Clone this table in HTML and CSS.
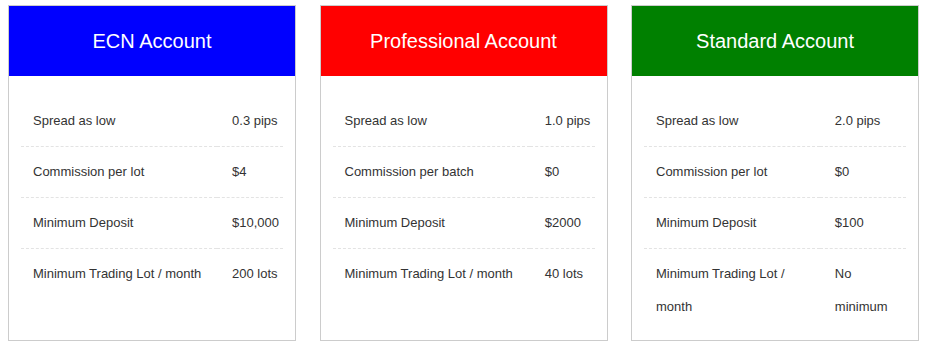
FILE: index.html
```html
<!DOCTYPE html>
<html>
<head>
<meta charset="utf-8">
<link rel="stylesheet" href="styles.css">
</head>
<body>
<div class="plans">
  <div class="card">
    <div class="card-head head-blue">ECN Account</div>
    <div class="card-body">
      <table class="specs">
        <tr><td>Spread as low</td><td>0.3 pips</td></tr>
        <tr><td>Commission per lot</td><td>$4</td></tr>
        <tr><td>Minimum Deposit</td><td>$10,000</td></tr>
        <tr><td>Minimum Trading Lot / month</td><td>200 lots</td></tr>
      </table>
    </div>
  </div>
  <div class="card">
    <div class="card-head head-red">Professional Account</div>
    <div class="card-body">
      <table class="specs">
        <tr><td>Spread as low</td><td>1.0 pips</td></tr>
        <tr><td>Commission per batch</td><td>$0</td></tr>
        <tr><td>Minimum Deposit</td><td>$2000</td></tr>
        <tr><td>Minimum Trading Lot / month</td><td>40 lots</td></tr>
      </table>
    </div>
  </div>
  <div class="card">
    <div class="card-head head-green">Standard Account</div>
    <div class="card-body">
      <table class="specs">
        <tr><td>Spread as low</td><td>2.0 pips</td></tr>
        <tr><td>Commission per lot</td><td>$0</td></tr>
        <tr><td>Minimum Deposit</td><td>$100</td></tr>
        <tr><td>Minimum Trading Lot / month</td><td>No minimum</td></tr>
      </table>
    </div>
  </div>
</div>
</body>
</html>
```

FILE: styles.css
```css
html, body {
  margin: 0;
  padding: 0;
  background: #ffffff;
}

body {
  font-family: "Liberation Sans", Arial, sans-serif;
  padding: 5px 10px 0 8px;
}

.plans {
  display: flex;
  justify-content: space-between;
  align-items: stretch;
  width: 911px;
}

.card {
  width: 288px;
  box-sizing: border-box;
  border: 1px solid #cccccc;
  background: #ffffff;
}

.card-head {
  height: 70px;
  display: flex;
  align-items: center;
  justify-content: center;
  color: #ffffff;
  font-size: 20px;
}

.head-blue { background: #0000ff; }
.head-red { background: #ff0000; }
.head-green { background: #008000; }

.card-body {
  padding: 20px 12px 8px;
}

.specs {
  width: 100%;
  border-collapse: collapse;
  font-size: 13px;
  color: #333333;
}

.specs td {
  padding: 8px 4px 9px 12px;
  line-height: 33px;
  vertical-align: top;
  text-align: left;
  border-bottom: 1px dashed #e3e3e3;
}

.specs td + td {
  padding-left: 15px;
  padding-right: 0;
}

.specs tr:last-child td {
  border-bottom: none;
}
```
